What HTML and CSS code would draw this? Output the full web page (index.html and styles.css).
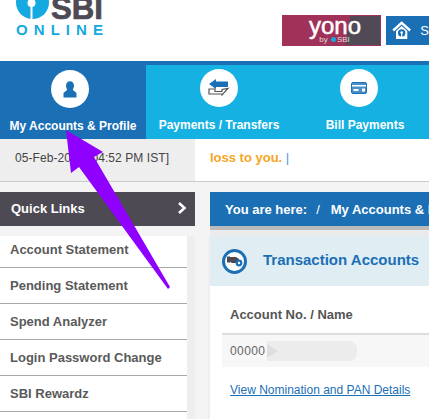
FILE: index.html
```html
<!DOCTYPE html>
<html lang="en">
<head>
    <meta charset="UTF-8">
    <meta name="viewport" content="width=device-width, initial-scale=1.0">
    <title>SBI Online</title>
    <link rel="stylesheet" href="styles.css">
</head>
<body>
    <header class="top">
        <svg class="logo" width="110" height="40" viewBox="0 0 110 40">
            <circle cx="32.5" cy="2.5" r="16.5" fill="#15a9e1"/>
            <circle cx="31.5" cy="3" r="4" fill="#fff"/>
            <rect x="30.5" y="3" width="2" height="17" fill="#fff"/>
            <text x="51" y="19" class="logo-sbi" textLength="52" lengthAdjust="spacingAndGlyphs">SBI</text>
            <text x="16" y="35" class="logo-online" textLength="87">ONLINE</text>
        </svg>
        <div class="top-right">
            <div class="yono">
                <span class="yono-name">yono</span>
                <span class="yono-by">by <i class="yono-dot"></i>SBI</span>
            </div>
            <div class="home-btn">
                <svg width="24" height="23" viewBox="0 0 24 23">
                    <polyline points="1.5,11.5 12,2 22.5,11.5" fill="none" stroke="#fff" stroke-width="3"/>
                    <path d="M5 12 L12 6 L19 12 V22 H5 Z" fill="#fff"/>
                    <circle cx="12" cy="14.5" r="4.6" fill="#1b6fb5"/>
                    <circle cx="12" cy="14" r="1.6" fill="#fff"/>
                    <rect x="11.3" y="14" width="1.4" height="7" fill="#fff"/>
                </svg>
                <span>S</span>
            </div>
        </div>
    </header>

    <nav class="nav">
        <a class="nav-item active">
            <span class="nav-icon shift-a">
                <svg width="14" height="17" viewBox="0 0 14 17">
                    <ellipse cx="7" cy="5" rx="4" ry="4.8" fill="#1b6fb5"/>
                    <path d="M4.5 8.5 H9.5 L13.5 12 V16.5 H0.5 V12 Z" fill="#1b6fb5"/>
                </svg>
            </span>
            <span class="nav-label">My Accounts &amp; Profile</span>
        </a>
        <a class="nav-item">
            <span class="nav-icon">
                <svg width="22" height="18" viewBox="0 0 22 18">
                    <path d="M1 5 L8 0 V2.5 H20 V8 H8 V10 Z" fill="#1b6fb5"/>
                    <path d="M1 10 H7 V12.5 H14 V10.5 L20 9.5 L14 16 V15 H1 Z" fill="#fff" stroke="#555" stroke-width="1.2"/>
                </svg>
            </span>
            <span class="nav-label">Payments / Transfers</span>
        </a>
        <a class="nav-item">
            <span class="nav-icon shift-c">
                <svg width="16" height="12" viewBox="0 0 16 12">
                    <rect x="0.5" y="0.5" width="15" height="11" rx="1.5" fill="#4a8fc7" stroke="#1b6fb5"/>
                    <rect x="1" y="3" width="14" height="1.5" fill="#fff"/>
                    <rect x="2.5" y="7" width="5" height="2" fill="#fff"/>
                    <rect x="11" y="6.5" width="3" height="3" fill="#fff"/>
                </svg>
            </span>
            <span class="nav-label">Bill Payments</span>
        </a>
    </nav>

    <div class="ticker">
        <div class="ticker-date">05-Feb-2021 [04:52 PM IST]</div>
        <div class="ticker-msg">loss to you. <span class="ticker-sep">|</span></div>
    </div>

    <div class="main">
        <aside class="side">
            <div class="quick">
                <span>Quick Links</span>
                <svg width="10" height="12" viewBox="0 0 10 12">
                    <path d="M2 1 L7.5 6 L2 11" fill="none" stroke="#fff" stroke-width="2.6"/>
                </svg>
            </div>
            <ul class="side-list">
                <li>Account Statement</li>
                <li>Pending Statement</li>
                <li>Spend Analyzer</li>
                <li>Login Password Change</li>
                <li>SBI Rewardz</li>
            </ul>
        </aside>

        <section class="content">
            <div class="crumb">
                <span>You are here:</span>
                <span class="crumb-sep">/</span>
                <span class="crumb-last">My Accounts &amp; Profile</span>
            </div>
            <div class="panel">
                <div class="panel-head">
                    <span class="panel-icon">
                        <svg width="16" height="12" viewBox="0 0 16 12">
                            <rect x="0" y="1.5" width="3" height="6" fill="#4d4a54"/>
                            <path d="M3 2 H9 L12 4 V8 H5 L3 7 Z" fill="#4d4a54"/>
                            <circle cx="12" cy="8" r="3.4" fill="#1b6fb5"/>
                            <circle cx="12" cy="8" r="1.2" fill="#fff"/>
                        </svg>
                    </span>
                    <h2>Transaction Accounts</h2>
                </div>
                <div class="panel-body">
                    <div class="col-head">Account No. / Name</div>
                    <div class="acc-row">
                        <span>00000</span>
                        <span class="smudge"></span>
                    </div>
                    <a class="nom-link" href="#">View Nomination and PAN Details</a>
                </div>
            </div>
        </section>
    </div>

    <svg class="arrow" width="429" height="419" viewBox="0 0 429 419">
        <polygon points="66,130 103,152 94,157 170,287 168,289 79,167 71,173" fill="#8f00ff"/>
    </svg>
</body>
</html>
```

FILE: styles.css
```css
html, body {
    margin: 0;
    padding: 0;
}
body {
    width: 429px;
    height: 419px;
    overflow: hidden;
    position: relative;
    font-family: "Liberation Sans", Arial, sans-serif;
    background-color: #f4f4f4;
}

/* header */
.top {
    height: 61px;
    background: white;
    display: flex;
    justify-content: space-between;
    overflow: hidden;
}
.logo {
    display: block;
}
.logo-sbi {
    font-size: 32px;
    font-weight: bold;
    fill: #4d4a54;
    stroke: #4d4a54;
    stroke-width: 0.7px;
}
.logo-online {
    font-size: 15px;
    font-weight: bold;
    fill: #15a9e1;
}
.top-right {
    display: flex;
    gap: 5px;
    padding-top: 15px;
    width: 147px;
    flex-shrink: 0;
}
.yono {
    width: 99px;
    height: 31px;
    box-sizing: border-box;
    border: 1px solid #a03259;
    background: linear-gradient(100deg, #a03259 66%, #4f4a55 66%);
    color: white;
    display: flex;
    flex-direction: column;
    align-items: center;
    flex-shrink: 0;
}
.yono-name {
    font-size: 24px;
    line-height: 19px;
    margin-left: 7px;
    -webkit-text-stroke: 0.5px white;
}
.yono-by {
    font-size: 8px;
    line-height: 10px;
    margin-left: 6px;
    color: #ddd;
}
.yono-dot {
    display: inline-block;
    width: 5px;
    height: 5px;
    margin: 0 1px;
    border-radius: 50%;
    background-color: #15a9e1;
}
.home-btn {
    flex: 1;
    height: 29px;
    margin-top: 1px;
    background-color: #1b6fb5;
    display: flex;
    align-items: center;
    gap: 9px;
    padding-left: 6px;
    color: white;
    font-size: 13px;
    white-space: nowrap;
    overflow: hidden;
}

/* main nav */
.nav {
    height: 78px;
    display: flex;
    box-sizing: border-box;
    background-color: #15b1e3;
    border-top: 4px solid #1b6fb5;
    overflow: hidden;
}
.nav-item {
    width: 146px;
    flex-shrink: 0;
    display: flex;
    flex-direction: column;
    align-items: center;
    padding-top: 4px;
    color: white;
}
.nav-item.active {
    background-color: #1b6fb5;
    margin-top: -4px;
    padding-top: 9px;
}
.nav-icon {
    width: 38px;
    height: 38px;
    border-radius: 50%;
    background: white;
    display: flex;
    align-items: center;
    justify-content: center;
}
.shift-a {
    margin-left: -6px;
}
.shift-c {
    margin-left: -12px;
}
.nav-label {
    margin-top: 11px;
    font-size: 12px;
    font-weight: bold;
    line-height: 14px;
    white-space: nowrap;
}

/* ticker */
.ticker {
    height: 42px;
    background: white;
    display: flex;
    align-items: stretch;
    border-bottom: 1px solid #ccc;
    font-size: 12px;
}
.ticker-date {
    width: 180px;
    padding-left: 15px;
    background-color: #eee;
    color: #444;
    line-height: 38px;
    letter-spacing: 0.08px;
}
.ticker-msg {
    padding-left: 15px;
    color: #f5a623;
    font-weight: bold;
    font-size: 13px;
    line-height: 38px;
}
.ticker-sep {
    color: #4a9be0;
    font-weight: normal;
}

/* below ticker */
.main {
    display: flex;
    gap: 15px;
    padding-top: 10px;
}
.side {
    width: 195px;
    flex-shrink: 0;
}
.quick {
    height: 34px;
    box-sizing: border-box;
    background-color: #4d4a54;
    color: white;
    font-size: 13px;
    font-weight: bold;
    display: flex;
    align-items: center;
    justify-content: space-between;
    padding: 0 8px 2px 11px;
}
.side-list {
    list-style: none;
    margin: 10px 0 0;
    padding: 0;
    width: 187px;
    height: 200px;
    background: white;
    border-right: 8px solid #eee;
}
.side-list li {
    height: 35px;
    line-height: 35px;
    padding-left: 10px;
    border-bottom: 1px solid #aaa;
    color: #5a5a5a;
    font-size: 13px;
    font-weight: bold;
}
.side-list li:first-child {
    height: 31px;
    line-height: 28px;
}
.content {
    flex: 1;
    min-width: 0;
}
.crumb {
    height: 34px;
    background-color: #1b6fb5;
    color: white;
    font-size: 13px;
    font-weight: bold;
    display: flex;
    align-items: center;
    padding-left: 15px;
    gap: 9px;
    white-space: nowrap;
    overflow: hidden;
    box-shadow: 0 4px 0 #bbb, 0 10px 0 #ebebeb;
}
.crumb-sep {
    font-weight: normal;
    padding-right: 2px;
}
.panel {
    margin-top: 10px;
    height: 200px;
    background: white;
    box-shadow: -2px 0 0 #efefef;
}
.panel-head {
    height: 50px;
    background-color: #e0edf3;
    display: flex;
    align-items: center;
    padding-left: 12px;
    gap: 16px;
}
.panel-icon {
    width: 19px;
    height: 19px;
    border: 3px solid #1b6fb5;
    border-radius: 50%;
    background: white;
    display: flex;
    align-items: center;
    justify-content: center;
}
.panel-head h2 {
    margin: 0 0 3px;
    font-size: 15px;
    color: #1b6fb5;
    white-space: nowrap;
}
.panel-body {
    padding-top: 21px;
}
.col-head {
    margin-left: 12px;
    padding: 0 0 11px 8px;
    font-size: 13px;
    font-weight: bold;
    color: #555;
    border-bottom: 2px solid #ddd;
    line-height: 15px;
}
.acc-row {
    margin-left: 12px;
    height: 32px;
    padding-left: 8px;
    background-color: #f7f7f7;
    display: flex;
    align-items: center;
    font-size: 12px;
    letter-spacing: 0.4px;
    color: #666;
}
.smudge {
    width: 90px;
    height: 20px;
    background-color: #ececec;
    border-radius: 0 8px 8px 0;
    margin-left: 2px;
    position: relative;
}
.smudge::before {
    content: "";
    position: absolute;
    left: 0;
    top: 3px;
    border-left: 11px solid #dedede;
    border-top: 7px solid transparent;
    border-bottom: 7px solid transparent;
}
.nom-link {
    display: block;
    margin: 16px 0 0 20px;
    font-size: 12px;
    line-height: 14px;
    color: #1b6fb5;
    white-space: nowrap;
}

/* annotation drawn over the screenshot */
.arrow {
    position: absolute;
    left: 0;
    top: 0;
    pointer-events: none;
}
```
